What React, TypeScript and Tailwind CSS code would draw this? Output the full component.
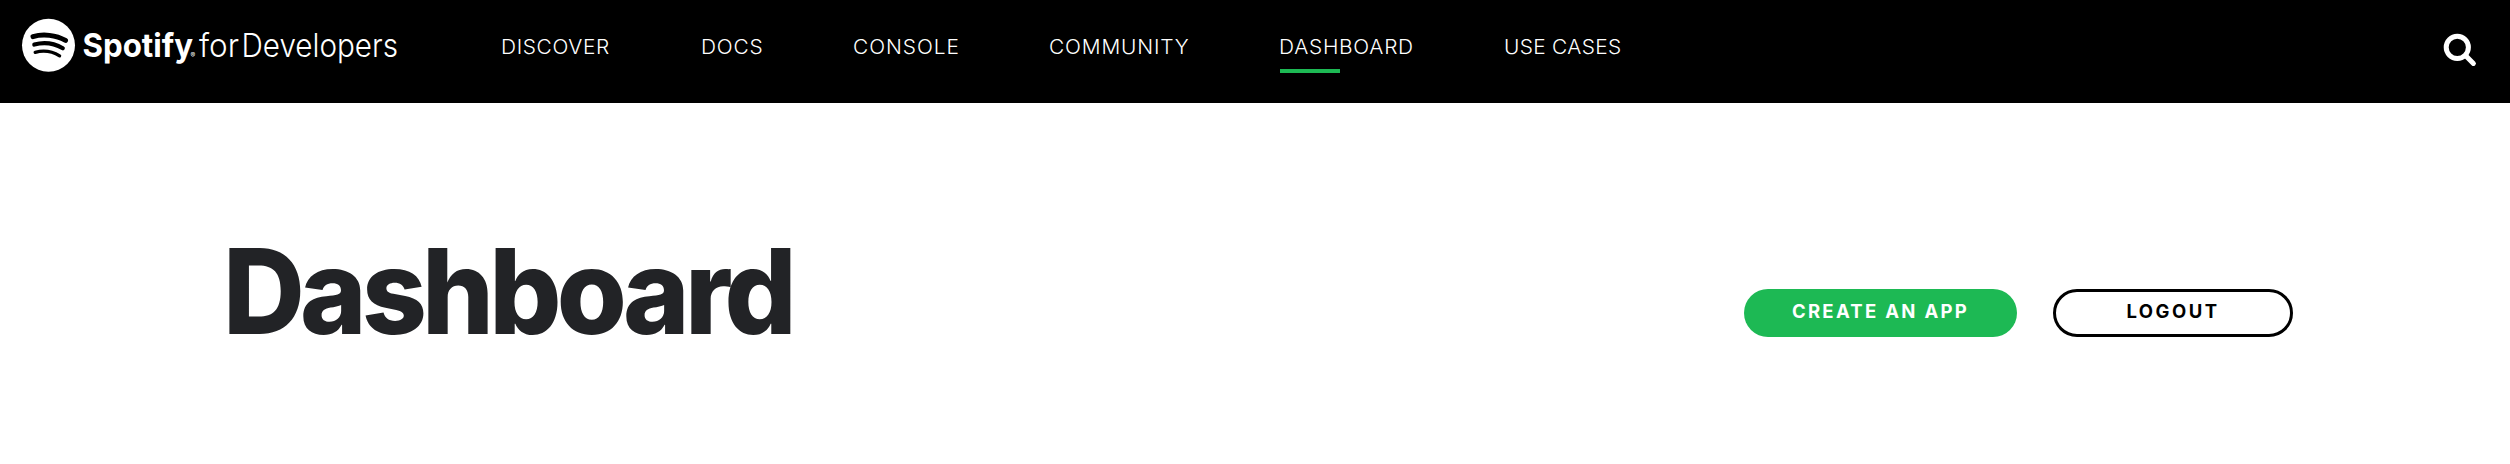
const navItems = [
  { label: "DISCOVER", width: "w-[200px]", spacing: "tracking-[0.6px]" },
  { label: "DOCS", width: "w-[152px]", spacing: "tracking-[0.8px]" },
  { label: "CONSOLE", width: "w-[196px]", spacing: "tracking-[0.9px]" },
  { label: "COMMUNITY", width: "w-[230px]", spacing: "tracking-[0.8px]" },
  { label: "DASHBOARD", width: "w-[225px]", spacing: "tracking-[0.7px]", active: true },
  { label: "USE CASES", width: "w-[130px]", spacing: "tracking-[0.3px]" },
];

function Logo() {
  return (
    <svg width="400" height="60" viewBox="20 15 400 60" className="block overflow-visible" fill="#fff" fontFamily="Inter, sans-serif">
      <circle cx="48.5" cy="45.3" r="26.5" />
      <g fill="none" stroke="#000" strokeLinecap="round">
        <path d="M33 36.6 C43 33.7 56 35 65.5 40.4" strokeWidth="5" />
        <path d="M34.3 44.6 C43.5 42 54 43.2 62.8 48.3" strokeWidth="4.2" />
        <path d="M35.2 52.3 C43.5 50.2 52 51.2 59.6 55.8" strokeWidth="3.3" />
      </g>
      <text x="82.5" y="57" fontSize="33" fontWeight="700" textLength="110.5" lengthAdjust="spacingAndGlyphs">Spotify</text>
      <text x="190.5" y="57.5" fontSize="7">®</text>
      <text x="199" y="57" fontSize="33" fontWeight="300" textLength="40" lengthAdjust="spacingAndGlyphs">for</text>
      <text x="241.5" y="57" fontSize="33" fontWeight="300" textLength="156.5" lengthAdjust="spacingAndGlyphs">Developers</text>
    </svg>
  );
}

function SearchIcon() {
  return (
    <svg width="34" height="34" viewBox="0 0 34 34" fill="none" stroke="#fff" strokeWidth="5" strokeLinecap="round">
      <circle cx="14.3" cy="14.3" r="11.1" />
      <path d="M23 23 L30.4 30.4" />
    </svg>
  );
}

export default function App() {
  return (
    <div className="h-[464px] w-full bg-white font-['Inter',sans-serif]">
      <header className="flex h-[103px] items-start bg-black pl-5 text-white">
        <div className="w-[481px] shrink-0 pt-[15px]">
          <Logo />
        </div>
        <nav className="flex pt-[33px]">
          {navItems.map((item) => (
            <a key={item.label} href="#" className={`block shrink-0 text-[19.5px] leading-7 font-light whitespace-nowrap ${item.width} ${item.spacing}`}>
              <span className="block w-fit origin-left scale-x-[1.07]">{item.label}</span>
              {item.active && <span className="mt-2 ml-px block h-1 w-[60px] bg-[#1db954]" />}
            </a>
          ))}
        </nav>
        <button aria-label="Search" className="mt-[33px] mr-[33px] ml-auto">
          <SearchIcon />
        </button>
      </header>
      <main className="flex items-start pr-[217px] pl-[223px]">
        <h1 className="mt-[116px] origin-left scale-x-[0.96] text-[118px] leading-[144px] font-extrabold tracking-[-5px] text-[#222326]">Dashboard</h1>
        <div className="mt-[186px] ml-auto flex gap-9">
          <button className="h-12 w-[273px] rounded-full bg-[#1db954] pb-[3px] text-[18.5px] font-bold tracking-[2.3px] text-white">CREATE AN APP</button>
          <button className="h-12 w-[240px] rounded-full border-3 border-black pb-[2px] text-[18.5px] font-bold tracking-[2.5px] text-black">LOGOUT</button>
        </div>
      </main>
    </div>
  );
}
